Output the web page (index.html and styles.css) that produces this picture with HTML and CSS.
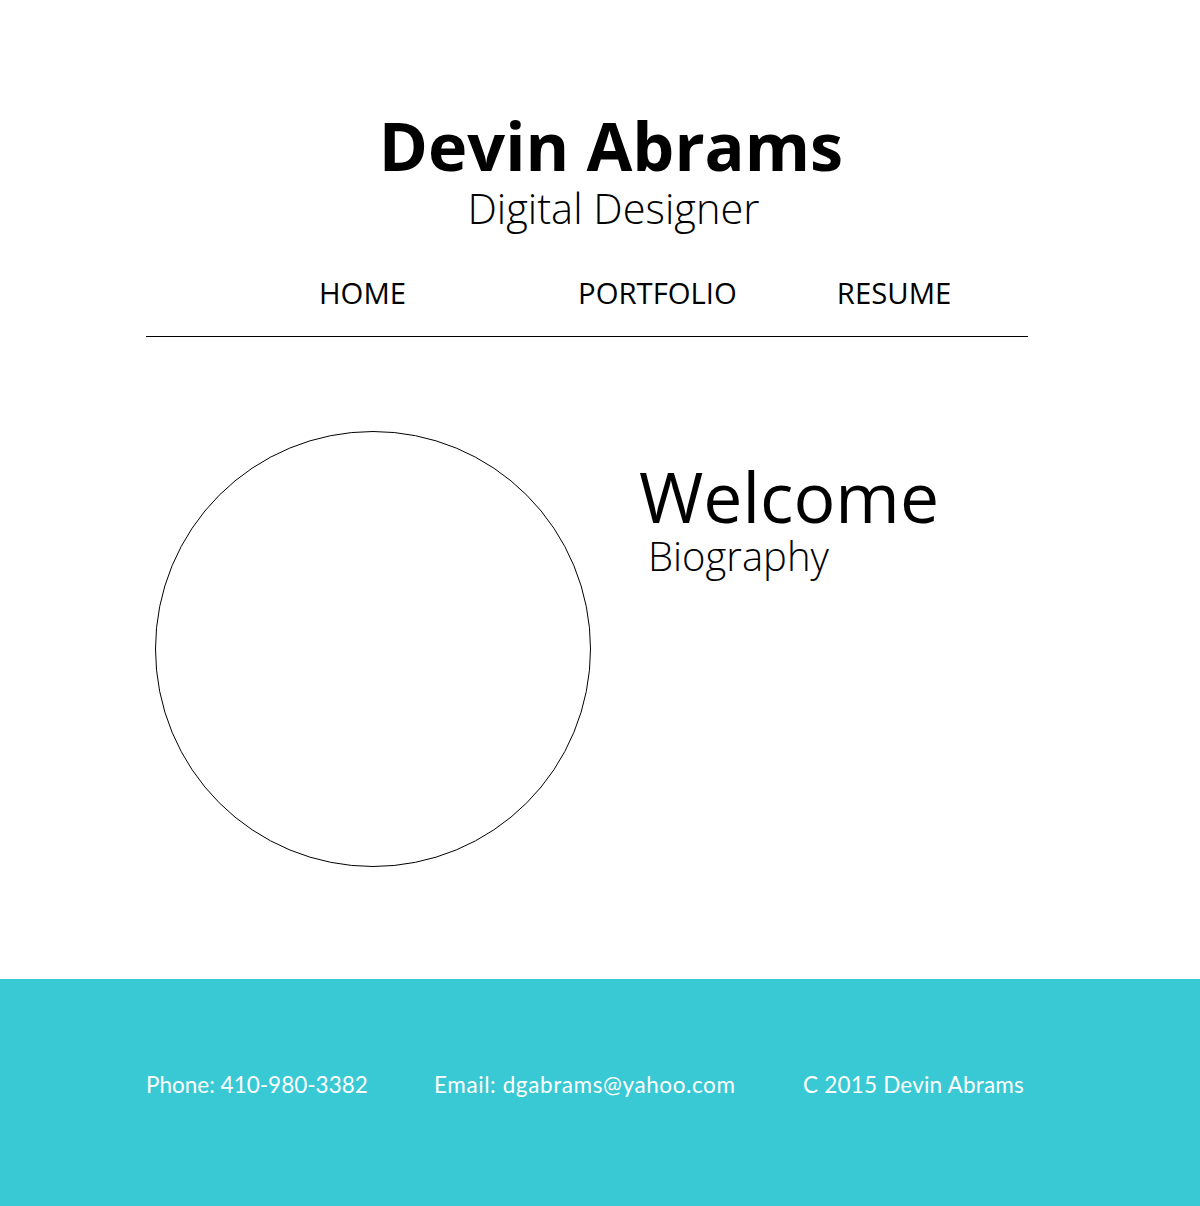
FILE: index.html
```html
<!DOCTYPE html>
<html lang="en">
<head>
<meta charset="utf-8">
<title>Devin Abrams - Digital Designer</title>
<link rel="stylesheet" href="styles.css">
</head>
<body>
<header class="masthead">
  <h1 class="name">Devin Abrams</h1>
  <p class="role">Digital Designer</p>
</header>
<nav class="nav">
  <a class="nav-home" href="#">HOME</a>
  <a class="nav-portfolio" href="#">PORTFOLIO</a>
  <a class="nav-resume" href="#">RESUME</a>
</nav>
<main class="intro">
  <div class="portrait"></div>
  <div class="intro-text">
    <h2 class="welcome">Welcome</h2>
    <p class="bio">Biography</p>
  </div>
</main>
<footer class="footer">
  <span class="f-phone">Phone: 410-980-3382</span>
  <span class="f-email">Email: dgabrams@yahoo.com</span>
  <span class="f-copy">C 2015 Devin Abrams</span>
</footer>
</body>
</html>
```

FILE: styles.css
```css
html, body {
  margin: 0;
  padding: 0;
  background: #fff;
  color: #000;
  font-family: "Open Sans", sans-serif;
}
.masthead {
  padding: 107px 0 0 22px;
  text-align: center;
}
.name {
  margin: 0;
  font-weight: 700;
  font-size: 66.5px;
  line-height: 76px;
}
.role {
  margin: 0;
  padding-left: 5px;
  font-weight: 300;
  font-size: 41.6px;
  line-height: 50px;
}
.nav {
  margin: 42px 0 0 146px;
  width: 882px;
  height: 61px;
  border-bottom: 1px solid #000;
  display: flex;
  font-size: 29.3px;
  line-height: 36px;
}
.nav a {
  color: #000;
  text-decoration: none;
}
.nav-home { margin-left: 173px; }
.nav-portfolio { margin-left: 172px; }
.nav-resume { margin-left: 100px; }
.intro {
  display: flex;
  margin: 94px 0 0 155px;
  height: 548px;
}
.portrait {
  width: 434px;
  height: 434px;
  border: 1px solid #000;
  border-radius: 50%;
  flex: none;
}
.intro-text {
  margin: 25px 0 0 48px;
}
.welcome {
  margin: 0;
  font-weight: 400;
  font-size: 69.7px;
  line-height: 80px;
}
.bio {
  margin: -5px 0 0 9px;
  font-weight: 300;
  font-size: 40px;
  line-height: 50px;
}
.footer {
  background: #38c9d4;
  height: 211px;
  padding: 0 0 16px 146px;
  display: grid;
  grid-template-columns: 288px 369px auto;
  align-items: center;
  color: #fff;
  font-family: Lato, sans-serif;
  font-size: 22.5px;
}
.f-email { letter-spacing: 0.6px; }
.f-copy { letter-spacing: 0.2px; }
```
